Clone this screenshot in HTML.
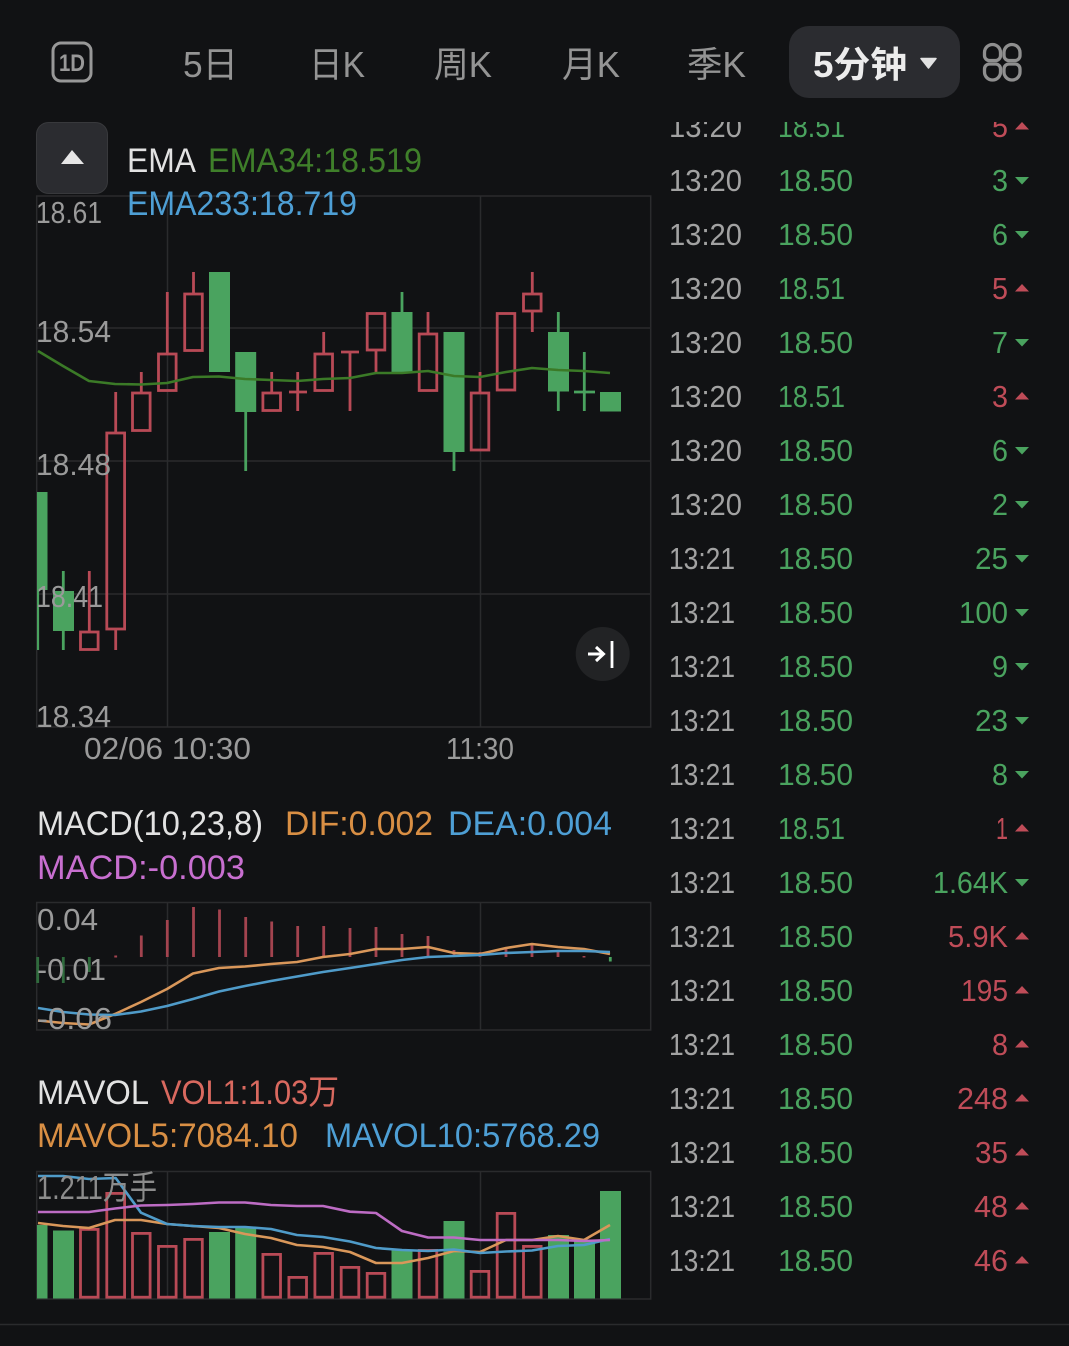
<!DOCTYPE html>
<html><head><meta charset="utf-8"><style>
html,body{margin:0;padding:0;background:#111214;width:1069px;height:1346px;overflow:hidden}
svg{display:block}
text{font-family:"Liberation Sans","Noto Sans CJK SC",sans-serif;font-size:31px}
.g{fill:none;stroke:#2a2b2d;stroke-width:1.5}
.r{fill:none;stroke:#b84a56;stroke-width:2.8}
.w{stroke:#b84a56;stroke-width:2.8}
.gw{stroke:#4aa35f;stroke-width:2.8}
.gb{fill:#4aa35f}
.l{fill:#9a9a9a}
.t{fill:#a2a2a2}
.gt{fill:#4aa35f}
.rt{fill:#bf4c58}
.tab{font-size:36px;fill:#949494}
.leg{font-size:34px}
.ln{fill:none;stroke-width:2.6;stroke-linejoin:round}
</style></head><body>
<svg width="1069" height="1346" viewBox="0 0 1069 1346" xmlns="http://www.w3.org/2000/svg">
<defs><clipPath id="c1"><rect x="660" y="122" width="409" height="1224"/></clipPath><clipPath id="c2"><rect x="37" y="196" width="614" height="1110"/></clipPath></defs>
<rect width="1069" height="1346" fill="#111214"/>

<!-- header -->
<rect x="53" y="43" width="38" height="38" rx="8" fill="none" stroke="#989898" stroke-width="3"/>
<text x="59" y="71" style="font-size:24px;font-weight:bold" fill="#989898" textLength="26" lengthAdjust="spacingAndGlyphs">1D</text>
<text class="tab" x="183" y="77" textLength="55" lengthAdjust="spacingAndGlyphs">5日</text>
<text class="tab" x="309" y="77" textLength="56" lengthAdjust="spacingAndGlyphs">日K</text>
<text class="tab" x="434" y="77" textLength="58" lengthAdjust="spacingAndGlyphs">周K</text>
<text class="tab" x="562" y="77" textLength="58" lengthAdjust="spacingAndGlyphs">月K</text>
<text class="tab" x="687" y="77" textLength="59" lengthAdjust="spacingAndGlyphs">季K</text>
<rect x="789" y="26" width="171" height="72" rx="20" fill="#2b2c30"/>
<text x="813" y="77" style="font-size:36px;font-weight:bold" fill="#ececec" textLength="94" lengthAdjust="spacingAndGlyphs">5分钟</text>
<path d="M921 58.500h15l-7.500 9.500z" fill="#e2e2e2" stroke="#e2e2e2" stroke-width="1.500" stroke-linejoin="round"/>
<g fill="none" stroke="#8f8f8f" stroke-width="3.300">
<path d="M984.500 52.500a8 8 0 0 1 16 0v3a5 5 0 0 1-5 5h-6a5 5 0 0 1-5-5z"/>
<path d="M1004 52.500a8 8 0 0 1 16 0v3a5 5 0 0 1-5 5h-6a5 5 0 0 1-5-5z"/>
<path d="M984.500 72a8 8 0 0 0 16 0v-3a5 5 0 0 0-5-5h-6a5 5 0 0 0-5 5z"/>
<path d="M1004 72a8 8 0 0 0 16 0v-3a5 5 0 0 0-5-5h-6a5 5 0 0 0-5 5z"/>
</g>

<!-- main chart grid -->
<rect class="g" x="36.700" y="196" width="614" height="531"/>
<path class="g" d="M37 328H651M37 461H651M37 594H651M167.500 196V727M480.500 196V727"/>

<!-- candles -->
<g clip-path="url(#c2)">
<rect class="gb" x="37" y="492" width="10.500" height="98"/><path class="gw" d="M37.700 590V650"/>
<path class="gw" d="M63.300 571V650"/><rect class="gb" x="53" y="591" width="21" height="40"/>
<path class="w" d="M89.300 571V632"/><rect class="r" x="80.500" y="632" width="17.600" height="17.500"/>
<path class="w" d="M115.700 392V433M115.700 629V650"/><rect class="r" x="106.800" y="433" width="17.800" height="196"/>
<path class="w" d="M141.300 372V393"/><rect class="r" x="132.500" y="393" width="17.600" height="37.500"/>
<path class="w" d="M167.300 292V354"/><rect class="r" x="158.500" y="354" width="17.600" height="36.500"/>
<path class="w" d="M193.500 272V294"/><rect class="r" x="184.700" y="294" width="17.600" height="56.500"/>
<rect class="gb" x="209" y="272" width="21" height="100"/>
<rect class="gb" x="235.200" y="352" width="21" height="60"/><path class="gw" d="M245.700 411V471"/>
<path class="w" d="M271.700 372V393"/><rect class="r" x="262.900" y="393" width="17.600" height="17.500"/>
<path class="w" d="M297.700 372V411M289 392H307"/>
<path class="w" d="M323.700 332V354"/><rect class="r" x="314.900" y="354" width="17.600" height="36.500"/>
<path class="w" d="M350 352V411M341 352H359"/>
<path class="w" d="M376 351V372"/><rect class="r" x="367.200" y="313.500" width="17.600" height="36.500"/>
<rect class="gb" x="391.500" y="312" width="21" height="60"/><path class="gw" d="M402 292V312"/>
<path class="w" d="M428 312V334"/><rect class="r" x="419.200" y="334" width="17.600" height="56.500"/>
<rect class="gb" x="443.500" y="332" width="21" height="120"/><path class="gw" d="M454 451V471"/>
<path class="w" d="M480 372V393"/><rect class="r" x="471.200" y="393" width="17.600" height="57"/>
<rect class="r" x="497.200" y="313.500" width="17.600" height="76.500"/>
<path class="w" d="M532.300 272V294M532.300 311V332"/><rect class="r" x="523.500" y="294" width="17.600" height="17"/>
<path class="gw" d="M558.300 312V411"/><rect class="gb" x="548" y="332" width="21" height="59.500"/>
<path class="gw" d="M584.300 352V411M574 392H595"/>
<rect class="gb" x="600" y="392" width="21" height="19.500"/>
<path class="ln" stroke="#3b7a27" d="M38 351L63 366L89 381L115 384L141 384.500L167 383L193 377L219 376.500L245 379L271 380L297 381L323 379L350 378L376 373L402 373L428 371L454 376L480 377L506 372L532 368L558 370L584 371L610 373"/>
</g>

<!-- chart labels -->
<text class="l" x="36" y="223" textLength="66" lengthAdjust="spacingAndGlyphs">18.61</text>
<text class="l" x="36" y="342" textLength="75" lengthAdjust="spacingAndGlyphs">18.54</text>
<text class="l" x="36" y="475" textLength="75" lengthAdjust="spacingAndGlyphs">18.48</text>
<text class="l" x="36" y="607" textLength="67" lengthAdjust="spacingAndGlyphs">18.41</text>
<text class="l" x="36" y="727" textLength="75" lengthAdjust="spacingAndGlyphs">18.34</text>
<text class="l" x="84" y="759" textLength="167" lengthAdjust="spacingAndGlyphs">02/06 10:30</text>
<text class="l" x="446" y="759" textLength="68" lengthAdjust="spacingAndGlyphs">11:30</text>

<!-- EMA legend -->
<rect x="36.500" y="122.500" width="71" height="71" rx="12" fill="#2b2c30" stroke="#38393c"/>
<path d="M61 164L72 150L84 164z" fill="#e6e6e6"/>
<text class="leg" x="127" y="172" fill="#e2e2e2" textLength="69" lengthAdjust="spacingAndGlyphs">EMA</text>
<text class="leg" x="208" y="172" fill="#3f7f2a" textLength="214" lengthAdjust="spacingAndGlyphs">EMA34:18.519</text>
<text class="leg" x="127" y="215" fill="#4e9fd5" textLength="230" lengthAdjust="spacingAndGlyphs">EMA233:18.719</text>

<!-- jump button -->
<circle cx="602.700" cy="654" r="27" fill="#222325"/>
<path d="M588 654H603M596 647L603.500 654L596 661" fill="none" stroke="#fff" stroke-width="3"/>
<path d="M612 641V668" stroke="#fff" stroke-width="2.800"/>

<!-- MACD -->
<text class="leg" x="37" y="835" fill="#e2e2e2" textLength="226" lengthAdjust="spacingAndGlyphs">MACD(10,23,8)</text>
<text class="leg" x="285" y="835" fill="#d98f44" textLength="148" lengthAdjust="spacingAndGlyphs">DIF:0.002</text>
<text class="leg" x="448" y="835" fill="#4e9fd5" textLength="164" lengthAdjust="spacingAndGlyphs">DEA:0.004</text>
<text class="leg" x="37" y="879" fill="#c86fd0" textLength="208" lengthAdjust="spacingAndGlyphs">MACD:-0.003</text>
<rect class="g" x="36.700" y="902.500" width="614" height="127.500"/>
<path class="g" d="M37 965.500H651M167.500 902V1030M480.500 902V1030"/>
<g stroke="#a3444f" stroke-width="2.800">
<path d="M115.700 955.500V957.500M141.300 935.500V957M167.300 920V957M193.500 907V957M219.500 909.500V957M245.700 917V957M271.700 921.500V957M297.700 926V957M323.700 926V957M350 928V957M376 927V957M402 934V957M428 936V957M454 950V957M480 952V957M506 947V957M532 943V957M558 950V957M584 956V957.500"/>
</g>
<path d="M37.700 957V983M63.300 957V983M89.300 957V972" stroke="#2f6b3d" stroke-width="2.800"/>
<path d="M610.300 957V961.500" stroke="#4aa35f" stroke-width="2.800"/>
<path class="ln" stroke="#d9975a" d="M38 1020.500L63 1023L89 1024.500L115 1014L141 1002L167 989L193 973.500L219 968L245 966.500L271 964L297 962L323 957L350 954L376 949L402 949L428 947L454 953L480 954L506 948L532 944L558 947L584 949L610 954"/>
<path class="ln" stroke="#4f9bc9" d="M38 1008L63 1012L89 1014.500L115 1015L141 1011.500L167 1006L193 999L219 991.500L245 986L271 981L297 976.500L323 972L350 968L376 964L402 960L428 957L454 956L480 955L506 953L532 952L558 951L584 951L610 952"/>
<text class="l" x="37" y="930" textLength="61" lengthAdjust="spacingAndGlyphs">0.04</text>
<text class="l" x="37" y="980" textLength="69" lengthAdjust="spacingAndGlyphs">-0.01</text>
<text class="l" x="37" y="1029" textLength="75" lengthAdjust="spacingAndGlyphs">-0.06</text>

<!-- MAVOL -->
<text class="leg" x="37" y="1104" fill="#e2e2e2" textLength="112" lengthAdjust="spacingAndGlyphs">MAVOL</text>
<text class="leg" x="161" y="1104" fill="#d9695f" textLength="178" lengthAdjust="spacingAndGlyphs">VOL1:1.03万</text>
<text class="leg" x="37" y="1147" fill="#d98f44" textLength="261" lengthAdjust="spacingAndGlyphs">MAVOL5:7084.10</text>
<text class="leg" x="325" y="1147" fill="#4e9fd5" textLength="275" lengthAdjust="spacingAndGlyphs">MAVOL10:5768.29</text>
<rect class="g" x="36.700" y="1171.500" width="614" height="127.500"/>
<path class="g" d="M167.500 1171V1299M480.500 1171V1299"/>
<rect class="gb" x="37" y="1225" width="10.500" height="73.500"/>
<rect class="gb" x="53" y="1230.500" width="21" height="68"/>
<rect class="r" x="80.500" y="1229.400" width="17.600" height="67.800"/>
<rect class="r" x="106.800" y="1193.400" width="17.800" height="103.800"/>
<rect class="r" x="132.500" y="1233.400" width="17.600" height="63.800"/>
<rect class="r" x="158.500" y="1246.400" width="17.600" height="50.800"/>
<rect class="r" x="184.700" y="1239.400" width="17.600" height="57.800"/>
<rect class="gb" x="209" y="1232" width="21" height="66.500"/>
<rect class="gb" x="235.200" y="1228" width="21" height="70.500"/>
<rect class="r" x="262.900" y="1254.400" width="17.600" height="42.800"/>
<rect class="r" x="288.900" y="1277.400" width="17.600" height="19.800"/>
<rect class="r" x="314.900" y="1253.400" width="17.600" height="43.800"/>
<rect class="r" x="341.200" y="1267.400" width="17.600" height="29.800"/>
<rect class="r" x="367.200" y="1273.400" width="17.600" height="23.800"/>
<rect class="gb" x="391.500" y="1250" width="21" height="48.500"/>
<rect class="r" x="419.200" y="1250.400" width="17.600" height="46.800"/>
<rect class="gb" x="443.500" y="1221" width="21" height="77.500"/>
<rect class="r" x="471.200" y="1271.400" width="17.600" height="25.800"/>
<rect class="r" x="497.200" y="1213.400" width="17.600" height="83.800"/>
<rect class="r" x="523.500" y="1246.400" width="17.600" height="50.800"/>
<rect class="gb" x="548" y="1235" width="21" height="63.500"/>
<rect class="gb" x="574" y="1240" width="21" height="58.500"/>
<rect class="gb" x="600" y="1191" width="21" height="107.500"/>
<path class="ln" stroke="#d9975a" d="M38 1223L63 1226L89 1228L115 1220L141 1220L167 1224L193 1226L219 1228L245 1234L271 1238L297 1245L323 1247L350 1252L376 1263L402 1263L428 1258L454 1251L480 1252L506 1240L532 1240L558 1236L584 1240L610 1225"/>
<path class="ln" stroke="#4f9bc9" d="M38 1176L63 1176L89 1179L115.700 1178L141 1212.700L167 1224L193 1226L219 1227L245 1227L271 1229L297 1235L323 1237L350 1241.500L376 1248L402 1250L428 1251L454 1249.500L480 1253L506 1251.500L532 1250.500L558 1246L584 1245L610 1239"/>
<path class="ln" stroke="#bd6cc4" d="M38 1212L63 1212L89 1212L115 1208.500L141 1205.500L167 1205L193 1204L219 1202.500L245 1202.500L271 1205L297 1206L323 1206L350 1211.700L376 1213L402 1231L428 1237.500L454 1237.500L480 1240L506 1240L532 1240L558 1240L584 1241L610 1240"/>
<text x="37" y="1199" style="font-size:33px" fill="#8c8c8c" textLength="120" lengthAdjust="spacingAndGlyphs">1.211万手</text>

<!-- bottom rule -->
<path d="M0 1324.500H1069" stroke="#2a2b2d" stroke-width="1.500"/>

<!-- trade list -->
<g clip-path="url(#c1)">
<text class="t" x="669" y="137" textLength="73" lengthAdjust="spacingAndGlyphs">13:20</text><text class="gt" x="778" y="137" textLength="67" lengthAdjust="spacingAndGlyphs">18.51</text><text class="rt" x="1008" y="137" text-anchor="end" textLength="16" lengthAdjust="spacingAndGlyphs">5</text><path class="rt" d="M1015 129.500L1022 122L1029 129.500z"/>
<text class="t" x="669" y="191" textLength="73" lengthAdjust="spacingAndGlyphs">13:20</text><text class="gt" x="778" y="191" textLength="75" lengthAdjust="spacingAndGlyphs">18.50</text><text class="gt" x="1008" y="191" text-anchor="end" textLength="16" lengthAdjust="spacingAndGlyphs">3</text><path class="gt" d="M1015 177L1029 177L1022 184.500z"/>
<text class="t" x="669" y="245" textLength="73" lengthAdjust="spacingAndGlyphs">13:20</text><text class="gt" x="778" y="245" textLength="75" lengthAdjust="spacingAndGlyphs">18.50</text><text class="gt" x="1008" y="245" text-anchor="end" textLength="16" lengthAdjust="spacingAndGlyphs">6</text><path class="gt" d="M1015 231L1029 231L1022 238.500z"/>
<text class="t" x="669" y="299" textLength="73" lengthAdjust="spacingAndGlyphs">13:20</text><text class="gt" x="778" y="299" textLength="67" lengthAdjust="spacingAndGlyphs">18.51</text><text class="rt" x="1008" y="299" text-anchor="end" textLength="16" lengthAdjust="spacingAndGlyphs">5</text><path class="rt" d="M1015 291.500L1022 284L1029 291.500z"/>
<text class="t" x="669" y="353" textLength="73" lengthAdjust="spacingAndGlyphs">13:20</text><text class="gt" x="778" y="353" textLength="75" lengthAdjust="spacingAndGlyphs">18.50</text><text class="gt" x="1008" y="353" text-anchor="end" textLength="16" lengthAdjust="spacingAndGlyphs">7</text><path class="gt" d="M1015 339L1029 339L1022 346.500z"/>
<text class="t" x="669" y="407" textLength="73" lengthAdjust="spacingAndGlyphs">13:20</text><text class="gt" x="778" y="407" textLength="67" lengthAdjust="spacingAndGlyphs">18.51</text><text class="rt" x="1008" y="407" text-anchor="end" textLength="16" lengthAdjust="spacingAndGlyphs">3</text><path class="rt" d="M1015 399.500L1022 392L1029 399.500z"/>
<text class="t" x="669" y="461" textLength="73" lengthAdjust="spacingAndGlyphs">13:20</text><text class="gt" x="778" y="461" textLength="75" lengthAdjust="spacingAndGlyphs">18.50</text><text class="gt" x="1008" y="461" text-anchor="end" textLength="16" lengthAdjust="spacingAndGlyphs">6</text><path class="gt" d="M1015 447L1029 447L1022 454.500z"/>
<text class="t" x="669" y="515" textLength="73" lengthAdjust="spacingAndGlyphs">13:20</text><text class="gt" x="778" y="515" textLength="75" lengthAdjust="spacingAndGlyphs">18.50</text><text class="gt" x="1008" y="515" text-anchor="end" textLength="16" lengthAdjust="spacingAndGlyphs">2</text><path class="gt" d="M1015 501L1029 501L1022 508.500z"/>
<text class="t" x="669" y="569" textLength="66" lengthAdjust="spacingAndGlyphs">13:21</text><text class="gt" x="778" y="569" textLength="75" lengthAdjust="spacingAndGlyphs">18.50</text><text class="gt" x="1008" y="569" text-anchor="end" textLength="33" lengthAdjust="spacingAndGlyphs">25</text><path class="gt" d="M1015 555L1029 555L1022 562.500z"/>
<text class="t" x="669" y="623" textLength="66" lengthAdjust="spacingAndGlyphs">13:21</text><text class="gt" x="778" y="623" textLength="75" lengthAdjust="spacingAndGlyphs">18.50</text><text class="gt" x="1008" y="623" text-anchor="end" textLength="49" lengthAdjust="spacingAndGlyphs">100</text><path class="gt" d="M1015 609L1029 609L1022 616.500z"/>
<text class="t" x="669" y="677" textLength="66" lengthAdjust="spacingAndGlyphs">13:21</text><text class="gt" x="778" y="677" textLength="75" lengthAdjust="spacingAndGlyphs">18.50</text><text class="gt" x="1008" y="677" text-anchor="end" textLength="16" lengthAdjust="spacingAndGlyphs">9</text><path class="gt" d="M1015 663L1029 663L1022 670.500z"/>
<text class="t" x="669" y="731" textLength="66" lengthAdjust="spacingAndGlyphs">13:21</text><text class="gt" x="778" y="731" textLength="75" lengthAdjust="spacingAndGlyphs">18.50</text><text class="gt" x="1008" y="731" text-anchor="end" textLength="33" lengthAdjust="spacingAndGlyphs">23</text><path class="gt" d="M1015 717L1029 717L1022 724.500z"/>
<text class="t" x="669" y="785" textLength="66" lengthAdjust="spacingAndGlyphs">13:21</text><text class="gt" x="778" y="785" textLength="75" lengthAdjust="spacingAndGlyphs">18.50</text><text class="gt" x="1008" y="785" text-anchor="end" textLength="16" lengthAdjust="spacingAndGlyphs">8</text><path class="gt" d="M1015 771L1029 771L1022 778.500z"/>
<text class="t" x="669" y="839" textLength="66" lengthAdjust="spacingAndGlyphs">13:21</text><text class="gt" x="778" y="839" textLength="67" lengthAdjust="spacingAndGlyphs">18.51</text><text class="rt" x="1008" y="839" text-anchor="end" textLength="12" lengthAdjust="spacingAndGlyphs">1</text><path class="rt" d="M1015 831.500L1022 824L1029 831.500z"/>
<text class="t" x="669" y="893" textLength="66" lengthAdjust="spacingAndGlyphs">13:21</text><text class="gt" x="778" y="893" textLength="75" lengthAdjust="spacingAndGlyphs">18.50</text><text class="gt" x="1008" y="893" text-anchor="end" textLength="75" lengthAdjust="spacingAndGlyphs">1.64K</text><path class="gt" d="M1015 879L1029 879L1022 886.500z"/>
<text class="t" x="669" y="947" textLength="66" lengthAdjust="spacingAndGlyphs">13:21</text><text class="gt" x="778" y="947" textLength="75" lengthAdjust="spacingAndGlyphs">18.50</text><text class="rt" x="1008" y="947" text-anchor="end" textLength="60" lengthAdjust="spacingAndGlyphs">5.9K</text><path class="rt" d="M1015 939.500L1022 932L1029 939.500z"/>
<text class="t" x="669" y="1001" textLength="66" lengthAdjust="spacingAndGlyphs">13:21</text><text class="gt" x="778" y="1001" textLength="75" lengthAdjust="spacingAndGlyphs">18.50</text><text class="rt" x="1008" y="1001" text-anchor="end" textLength="47" lengthAdjust="spacingAndGlyphs">195</text><path class="rt" d="M1015 993.500L1022 986L1029 993.500z"/>
<text class="t" x="669" y="1055" textLength="66" lengthAdjust="spacingAndGlyphs">13:21</text><text class="gt" x="778" y="1055" textLength="75" lengthAdjust="spacingAndGlyphs">18.50</text><text class="rt" x="1008" y="1055" text-anchor="end" textLength="16" lengthAdjust="spacingAndGlyphs">8</text><path class="rt" d="M1015 1047.500L1022 1040L1029 1047.500z"/>
<text class="t" x="669" y="1109" textLength="66" lengthAdjust="spacingAndGlyphs">13:21</text><text class="gt" x="778" y="1109" textLength="75" lengthAdjust="spacingAndGlyphs">18.50</text><text class="rt" x="1008" y="1109" text-anchor="end" textLength="51" lengthAdjust="spacingAndGlyphs">248</text><path class="rt" d="M1015 1101.500L1022 1094L1029 1101.500z"/>
<text class="t" x="669" y="1163" textLength="66" lengthAdjust="spacingAndGlyphs">13:21</text><text class="gt" x="778" y="1163" textLength="75" lengthAdjust="spacingAndGlyphs">18.50</text><text class="rt" x="1008" y="1163" text-anchor="end" textLength="33" lengthAdjust="spacingAndGlyphs">35</text><path class="rt" d="M1015 1155.500L1022 1148L1029 1155.500z"/>
<text class="t" x="669" y="1217" textLength="66" lengthAdjust="spacingAndGlyphs">13:21</text><text class="gt" x="778" y="1217" textLength="75" lengthAdjust="spacingAndGlyphs">18.50</text><text class="rt" x="1008" y="1217" text-anchor="end" textLength="34" lengthAdjust="spacingAndGlyphs">48</text><path class="rt" d="M1015 1209.500L1022 1202L1029 1209.500z"/>
<text class="t" x="669" y="1271" textLength="66" lengthAdjust="spacingAndGlyphs">13:21</text><text class="gt" x="778" y="1271" textLength="75" lengthAdjust="spacingAndGlyphs">18.50</text><text class="rt" x="1008" y="1271" text-anchor="end" textLength="34" lengthAdjust="spacingAndGlyphs">46</text><path class="rt" d="M1015 1263.500L1022 1256L1029 1263.500z"/>
</g>
</svg>
</body></html>
